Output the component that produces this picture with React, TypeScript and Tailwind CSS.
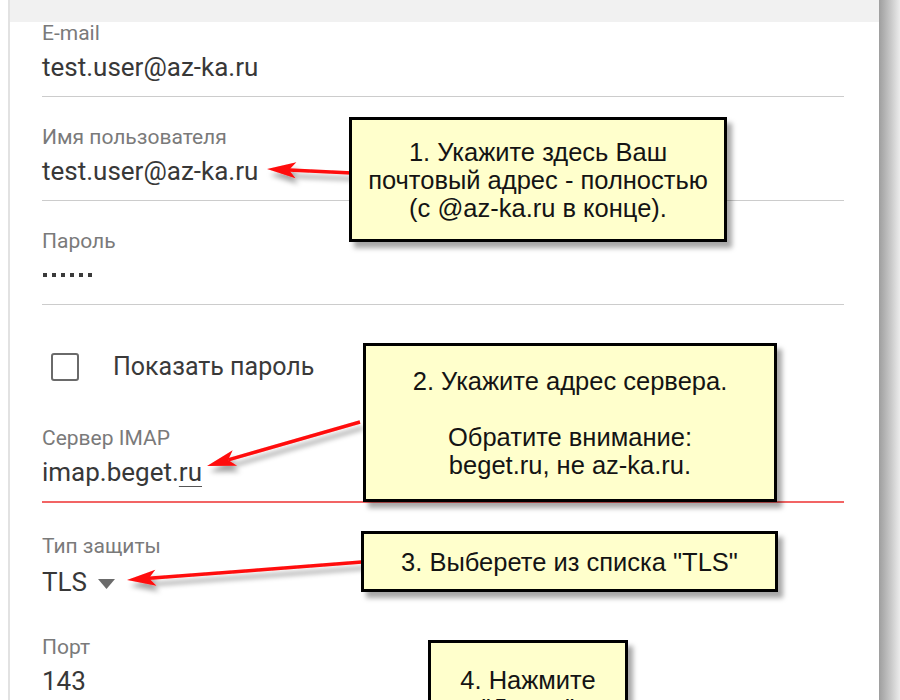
import React from "react";

type Pt = [number, number];

function Arrow({ s, t }: { s: Pt; t: Pt }) {
  const [sx, sy] = s;
  const [tx, ty] = t;
  const dx = tx - sx;
  const dy = ty - sy;
  const L = Math.hypot(dx, dy);
  const ux = dx / L;
  const uy = dy / L;
  const px = -uy;
  const py = ux;
  const len = 29;
  const half = 8;
  const notch = 22;
  const bx = tx - ux * len;
  const by = ty - uy * len;
  const nx = tx - ux * notch;
  const ny = ty - uy * notch;
  const pts = `${tx},${ty} ${bx + px * half},${by + py * half} ${nx},${ny} ${bx - px * half},${by - py * half}`;
  return (
    <g filter="url(#arrowShadow)">
      <line x1={sx} y1={sy} x2={nx} y2={ny} stroke="#ff0a0a" strokeWidth={3.5} />
      <polygon points={pts} fill="#ff0a0a" />
    </g>
  );
}

function Field({
  label,
  children,
  wrap,
  valueGap,
  line,
}: {
  label: string;
  children: React.ReactNode;
  wrap: string;
  valueGap: string;
  line?: string;
}) {
  return (
    <div className={wrap}>
      <div className="h-[22px] leading-[22px] text-[21px] text-[#7a7a7a]">{label}</div>
      <div className={valueGap + " h-[34px] leading-[34px] text-[26px] text-[#383838] flex items-center"}>
        {children}
      </div>
      {line ? <div className={"mt-[12px] " + line} /> : null}
    </div>
  );
}

function Callout({ className, children }: { className: string; children: React.ReactNode }) {
  return (
    <div
      className={
        "absolute border-[3px] border-black bg-[#ffffcc] shadow-[5px_6px_5px_rgba(0,0,0,0.35)] flex flex-col items-center text-center text-[25.5px] leading-[28px] text-[#141414] font-['Liberation_Sans',Arial,sans-serif] " +
        className
      }
    >
      {children}
    </div>
  );
}

export default function App() {
  return (
    <div className="w-[900px] h-[700px] relative overflow-hidden bg-white flex font-['Roboto',sans-serif]">
      <div className="w-[8px] shrink-0 bg-white" />
      <div className="w-[2px] shrink-0 bg-[#e2e2e2]" />
      <div className="w-[869px] shrink-0 flex flex-col">
        <div className="h-[22px] shrink-0 bg-[#f1f1f1]" />
        <div className="pl-[32px] pr-[35px] flex flex-col">
          <Field label="E-mail" wrap="pt-0" valueGap="mt-[6px]" line="h-[1px] bg-[#cccccc]">
            test.user@az-ka.ru
          </Field>
          <Field label="Имя пользователя" wrap="pt-[29px]" valueGap="mt-[6px]" line="h-[1px] bg-[#cccccc]">
            test.user@az-ka.ru
          </Field>
          <Field label="Пароль" wrap="pt-[29px]" valueGap="mt-[6px]" line="h-[1px] bg-[#cccccc]">
            <span className="flex gap-[5.5px] pl-[1px]" aria-label="••••••">
              <span className="w-[3.5px] h-[3.5px] bg-[#3a3a3a]" />
              <span className="w-[3.5px] h-[3.5px] bg-[#3a3a3a]" />
              <span className="w-[3.5px] h-[3.5px] bg-[#3a3a3a]" />
              <span className="w-[3.5px] h-[3.5px] bg-[#3a3a3a]" />
              <span className="w-[3.5px] h-[3.5px] bg-[#3a3a3a]" />
              <span className="w-[3.5px] h-[3.5px] bg-[#3a3a3a]" />
            </span>
          </Field>
          <div className="h-[93px] pt-[48px] shrink-0">
            <div className="flex items-center h-[28px]">
              <div className="ml-[9px] w-[28px] h-[28px] rounded-[3px] border-[2.5px] border-[#6a6a6a]" />
              <span className="ml-[34px] text-[25px] text-[#3a3a3a]">Показать пароль</span>
            </div>
          </div>
          <Field label="Сервер IMAP" wrap="pt-[29px]" valueGap="mt-[6px]" line="h-[2px] bg-[#f26464]">
            imap.beget.
            <span className="underline decoration-[#555] underline-offset-[5px] decoration-1">ru</span>
          </Field>
          <Field label="Тип защиты" wrap="pt-[32px]" valueGap="mt-[8px]">
            TLS
            <svg width="17" height="11" viewBox="0 0 17 11" className="ml-[11px] mt-[4px]">
              <polygon points="0,0 17,0 8.5,10" fill="#6b6b6b" />
            </svg>
          </Field>
          <Field label="Порт" wrap="pt-[37px]" valueGap="mt-[6px]">
            143
          </Field>
        </div>
      </div>
      <div className="w-[21px] shrink-0 bg-linear-to-r from-[#9e9e9e] via-[#c4c4c4] to-[#ececec]" />

      <svg className="absolute left-0 top-0 pointer-events-none" width="900" height="700">
        <defs>
          <filter id="arrowShadow" x="-20%" y="-50%" width="140%" height="250%">
            <feDropShadow dx="3" dy="6" stdDeviation="2.5" floodColor="#000" floodOpacity="0.35" />
          </filter>
        </defs>
        <Arrow s={[352, 173]} t={[267, 169]} />
        <Arrow s={[360, 422]} t={[207, 466]} />
        <Arrow s={[362, 562]} t={[127, 580]} />
      </svg>

      <Callout className="left-[349px] top-[117px] w-[378px] h-[125px] justify-center">
        <div>1. Укажите здесь Ваш</div>
        <div>почтовый адрес - полностью</div>
        <div>(с @az-ka.ru в конце).</div>
      </Callout>
      <Callout className="left-[363px] top-[343px] w-[414px] h-[159px] justify-center">
        <div>2. Укажите адрес сервера.</div>
        <div>&nbsp;</div>
        <div>Обратите внимание:</div>
        <div>beget.ru, не az-ka.ru.</div>
      </Callout>
      <Callout className="left-[361px] top-[531px] w-[417px] h-[61px] justify-center">
        <div>3. Выберете из списка "TLS"</div>
      </Callout>
      <Callout className="left-[428px] top-[640px] w-[200px] h-[110px] pt-[23px]">
        <div>4. Нажмите</div>
        <div>"Далее"</div>
      </Callout>
    </div>
  );
}
